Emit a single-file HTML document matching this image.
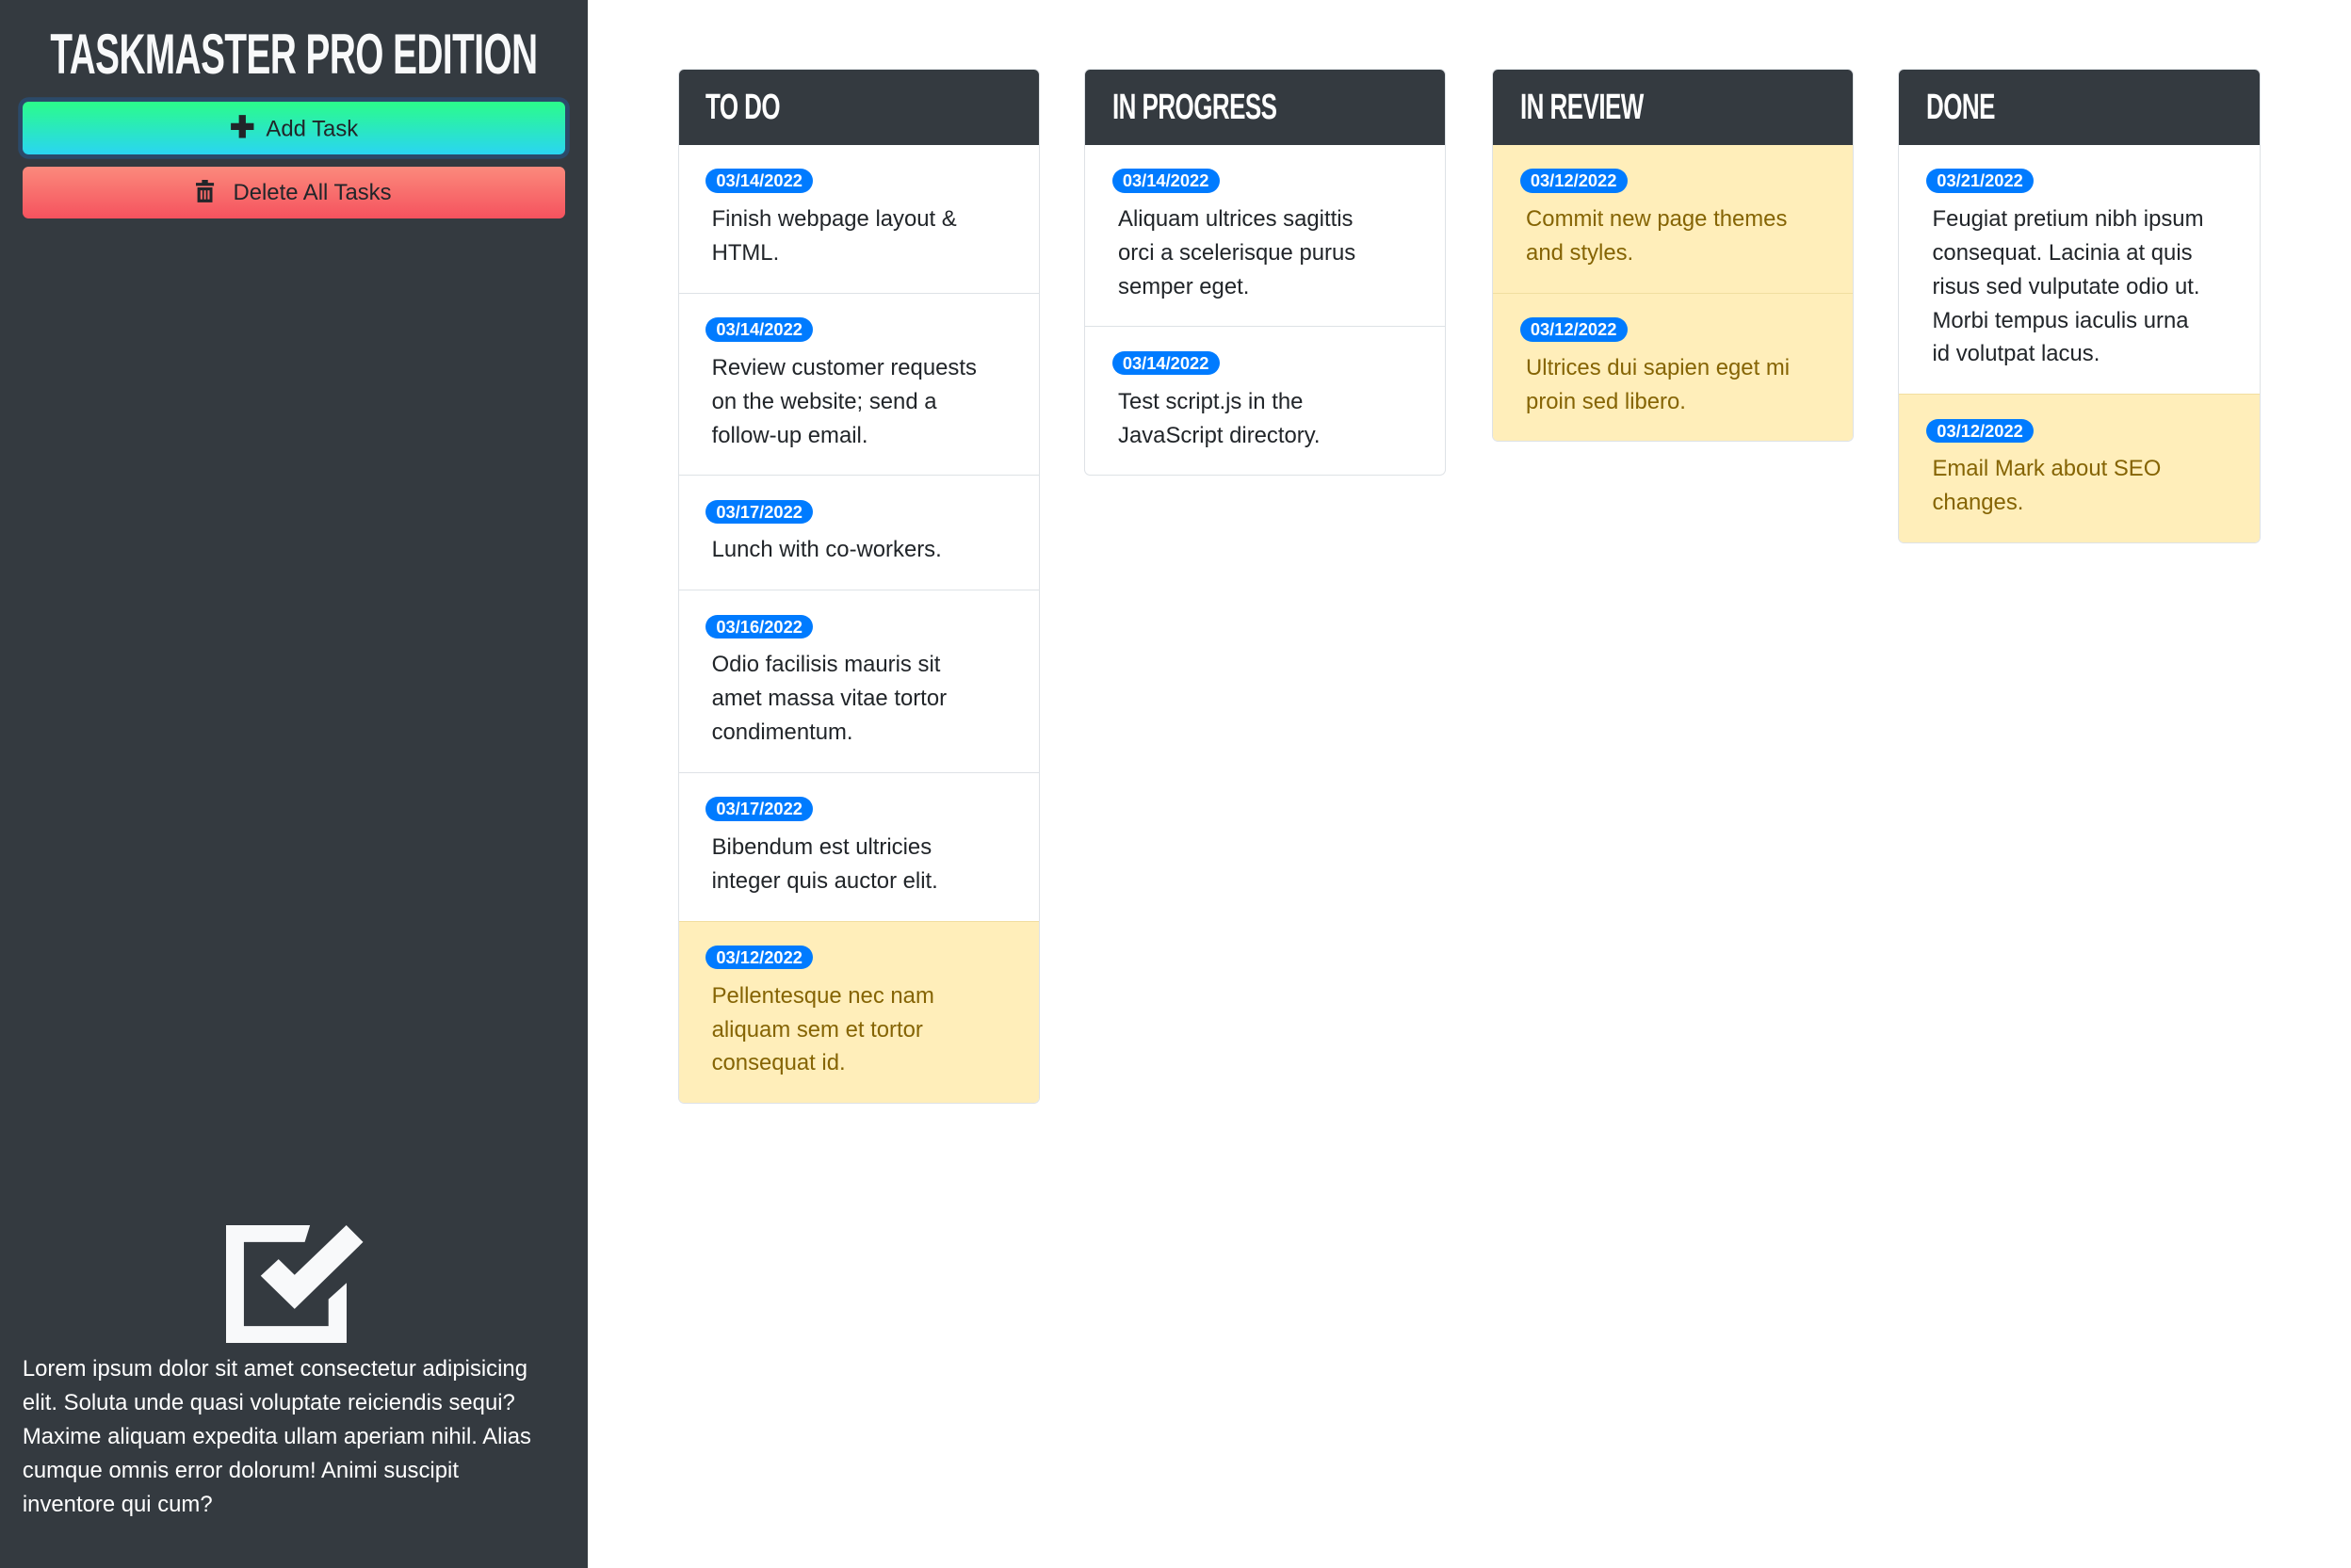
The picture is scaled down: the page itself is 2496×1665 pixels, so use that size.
<!DOCTYPE html>
<html><head><meta charset="utf-8"><style>
html,body{margin:0;padding:0}
body{width:1568px;height:1046px;zoom:1.592;font-family:"Liberation Sans",sans-serif;background:#fff;position:relative;overflow:hidden}
.side{position:absolute;left:0;top:0;width:392px;height:1046px;background:#343a40}
.title{position:absolute;left:196px;top:14px;color:#f8f9fa;font-weight:bold;font-size:38px;line-height:44px;white-space:nowrap;transform:translateX(-50%) scaleX(0.64);letter-spacing:-0.5px}
.btn{position:absolute;left:15px;width:362px;height:35px;border-radius:4px;text-align:center;font-size:15px;line-height:35px;color:#212529}
.add{top:68px;background:linear-gradient(#2bfc8a,#2ad5f2);box-shadow:0 0 0 3px #2b4a6a}
.del{top:111px;background:linear-gradient(#fb8a7c,#f5525e)}
.icon{position:absolute;left:151px;top:817px}
.para{position:absolute;left:15px;top:902px;width:375px;color:#fff;font-size:15px;line-height:22.6px;white-space:nowrap}
.col{position:absolute;top:46px;width:240px;border:1px solid #dee2e6;border-radius:4px;overflow:hidden;background:#fff}
.hd{height:50px;background:#343a40;color:#fff;font-weight:bold;font-size:24px;line-height:50px;padding-left:18px;white-space:nowrap}
.hd span{display:inline-block;transform:scaleX(0.68);transform-origin:left;letter-spacing:-0.5px}
.it{padding:16px 10px 15px 22px;border-top:1px solid #dee2e6;font-size:15px;line-height:22.5px;color:#212529}
.hd+.it{border-top:none}
.y{background:#ffeeba;color:#856404;border-top-color:#f1dea0}
.b{display:inline-block;background:#007bff;color:#fff;font-weight:bold;font-size:11.5px;line-height:16px;height:16px;padding:0 7px;border-radius:9px;margin-left:-4px;margin-bottom:5px;vertical-align:top}
</style></head><body>
<div class="side">
<div class="title">TASKMASTER PRO EDITION</div>
<div class="btn add"><b style="font-size:20px;vertical-align:-1px">✚</b>&nbsp; Add Task</div>
<div class="btn del"><svg width="12" height="15" viewBox="0 0 12 15" style="vertical-align:-2px"><path d="M4 0h4v2h4v2H0V2h4z M1 5h10v10H1z" fill="#212529"/><rect x="3" y="7" width="1.3" height="6" fill="#f76a6a"/><rect x="5.4" y="7" width="1.3" height="6" fill="#f76a6a"/><rect x="7.8" y="7" width="1.3" height="6" fill="#f76a6a"/></svg>&nbsp;&nbsp; Delete All Tasks</div>
<svg class="icon" width="92" height="79" viewBox="0 0 92 79"><path d="M0 0H56L52.5 11.25H11.9V67.3H68.3V49.4L80.4 38.5V78.5H0Z" fill="#f8f9fa"/><path d="M23.1 33.75L35 22.7L45.7 33.1L80.2 0L91.4 11.25L45.7 55.8Z" fill="#f8f9fa"/></svg>
<div class="para">Lorem ipsum dolor sit amet consectetur adipisicing<br>elit. Soluta unde quasi voluptate reiciendis sequi?<br>Maxime aliquam expedita ullam aperiam nihil. Alias<br>cumque omnis error dolorum! Animi suscipit<br>inventore qui cum?</div>
</div>

<div class="col" style="left:452px">
<div class="hd"><span>TO DO</span></div>
<div class="it"><span class="b">03/14/2022</span><br>Finish webpage layout &amp;<br>HTML.</div>
<div class="it"><span class="b">03/14/2022</span><br>Review customer requests<br>on the website; send a<br>follow-up email.</div>
<div class="it"><span class="b">03/17/2022</span><br>Lunch with co-workers.</div>
<div class="it"><span class="b">03/16/2022</span><br>Odio facilisis mauris sit<br>amet massa vitae tortor<br>condimentum.</div>
<div class="it"><span class="b">03/17/2022</span><br>Bibendum est ultricies<br>integer quis auctor elit.</div>
<div class="it y"><span class="b">03/12/2022</span><br>Pellentesque nec nam<br>aliquam sem et tortor<br>consequat id.</div>
</div>

<div class="col" style="left:723px">
<div class="hd"><span>IN PROGRESS</span></div>
<div class="it"><span class="b">03/14/2022</span><br>Aliquam ultrices sagittis<br>orci a scelerisque purus<br>semper eget.</div>
<div class="it"><span class="b">03/14/2022</span><br>Test script.js in the<br>JavaScript directory.</div>
</div>

<div class="col" style="left:995px">
<div class="hd"><span>IN REVIEW</span></div>
<div class="it y"><span class="b">03/12/2022</span><br>Commit new page themes<br>and styles.</div>
<div class="it y"><span class="b">03/12/2022</span><br>Ultrices dui sapien eget mi<br>proin sed libero.</div>
</div>

<div class="col" style="left:1266px">
<div class="hd"><span>DONE</span></div>
<div class="it"><span class="b">03/21/2022</span><br>Feugiat pretium nibh ipsum<br>consequat. Lacinia at quis<br>risus sed vulputate odio ut.<br>Morbi tempus iaculis urna<br>id volutpat lacus.</div>
<div class="it y"><span class="b">03/12/2022</span><br>Email Mark about SEO<br>changes.</div>
</div>
</body></html>
